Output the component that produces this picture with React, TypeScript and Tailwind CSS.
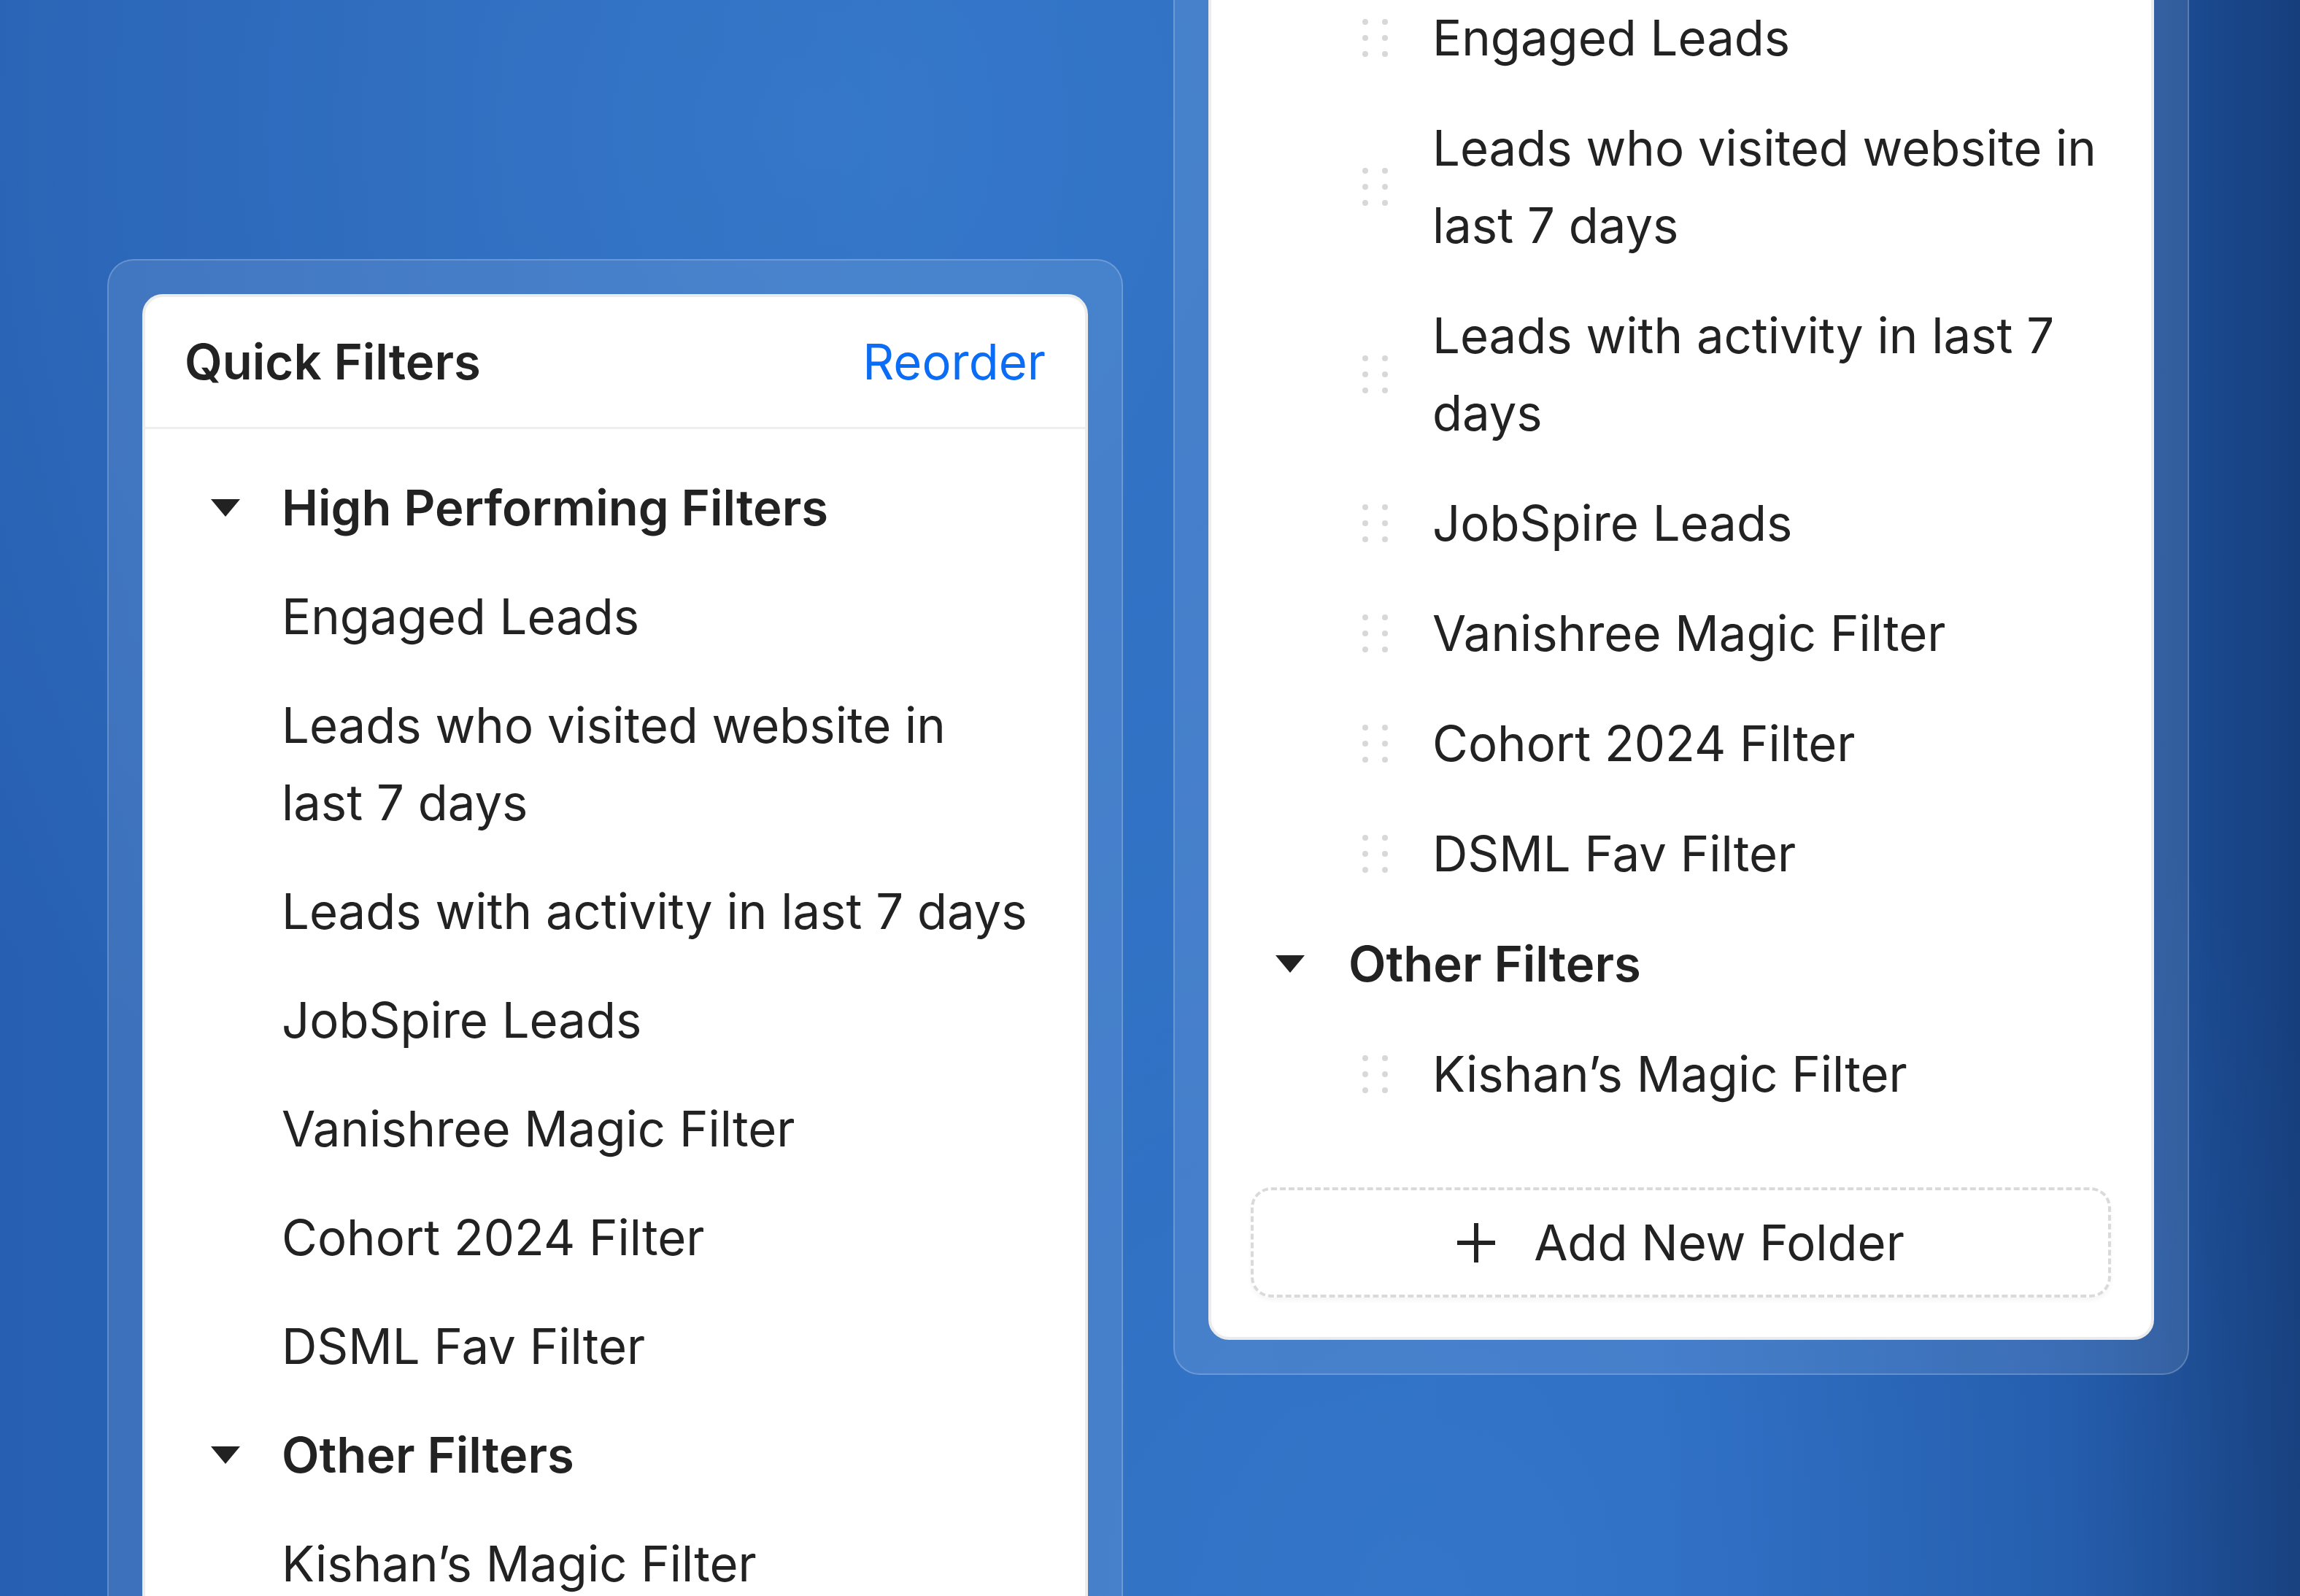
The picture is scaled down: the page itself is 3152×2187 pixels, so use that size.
import React from 'react'

type Row =
  | { kind: 'folder'; label: string }
  | { kind: 'item'; label: string }

const rows: Row[] = [
  { kind: 'folder', label: 'High Performing Filters' },
  { kind: 'item', label: 'Engaged Leads' },
  { kind: 'item', label: 'Leads who visited website in last 7 days' },
  { kind: 'item', label: 'Leads with activity in last 7 days' },
  { kind: 'item', label: 'JobSpire Leads' },
  { kind: 'item', label: 'Vanishree Magic Filter' },
  { kind: 'item', label: 'Cohort 2024 Filter' },
  { kind: 'item', label: 'DSML Fav Filter' },
  { kind: 'folder', label: 'Other Filters' },
  { kind: 'item', label: 'Kishan\u2019s Magic Filter' },
]

function Caret() {
  return (
    <svg width="40" height="24" viewBox="0 0 40 24" className="shrink-0">
      <polygon points="0,0 40,0 20,24" fill="#222222" />
    </svg>
  )
}

function DragHandle() {
  return (
    <div className="grid shrink-0 grid-cols-2 gap-x-[19px] gap-y-[14px]">
      {Array.from({ length: 6 }).map((_, i) => (
        <span key={i} className="h-2 w-2 rounded-full bg-[#d8d8d8]" />
      ))}
    </div>
  )
}

function PlusIcon() {
  return (
    <svg width="52" height="54" viewBox="0 0 52 54" className="shrink-0">
      <line x1="26" y1="0" x2="26" y2="54" stroke="#222222" strokeWidth="6" />
      <line x1="0" y1="27" x2="52" y2="27" stroke="#222222" strokeWidth="6" />
    </svg>
  )
}

function Frame({ children }: { children: React.ReactNode }) {
  return (
    <div className="w-[1392px] rounded-[36px] border-2 border-white/20 bg-white/10 p-[46px]">
      <div className="rounded-[28px] border-4 border-[#ececec] bg-white">{children}</div>
    </div>
  )
}

function FilterList() {
  return (
    <div className="pt-[33px]">
      {rows.map((row) =>
        row.kind === 'folder' ? (
          <div key={row.label} className="flex items-center gap-[57px] py-[21.5px] pl-[90px] pr-[68px]">
            <Caret />
            <span className="font-semibold">{row.label}</span>
          </div>
        ) : (
          <div key={row.label} className="py-[21.5px] pl-[187px] pr-[68px]">
            {row.label}
          </div>
        ),
      )}
    </div>
  )
}

function ReorderList() {
  return (
    <div className="pt-[124.5px] pb-[54px]">
      {rows.slice(1).map((row) =>
        row.kind === 'folder' ? (
          <div key={row.label} className="flex items-center gap-[60px] py-[22.5px] pl-[88px] pr-[50px]">
            <Caret />
            <span className="font-semibold">{row.label}</span>
          </div>
        ) : (
          <div key={row.label} className="flex items-center gap-[61px] py-[22.5px] pl-[207px] pr-[50px]">
            <DragHandle />
            <span>{row.label}</span>
          </div>
        ),
      )}
      <button className="mx-[54px] mt-[79.5px] flex h-[151px] w-[calc(100%-109px)] items-center justify-center gap-[53px] rounded-[28px] border-4 border-dashed border-[#dadada] shadow-[0_4px_6px_rgba(0,0,0,0.04)]">
        <PlusIcon />
        <span>Add New Folder</span>
      </button>
    </div>
  )
}

export default function App() {
  return (
    <div
      className="flex h-[2187px] w-[3152px] gap-[69px] overflow-hidden bg-[radial-gradient(ellipse_at_35%_8%,rgba(80,150,228,0.28),transparent_55%),radial-gradient(ellipse_at_62%_100%,rgba(80,150,228,0.25),transparent_50%),linear-gradient(90deg,#2760b2_0%,#2c6cc0_40%,#2a69bf_72%,#2158a8_90%,#163e7c_100%)] pl-[147px] text-[67px] leading-[106px] text-[#222222]"
      style={{ fontFamily: 'Inter, "Noto Sans", sans-serif' }}
    >
      <div className="mt-[355px] shrink-0">
        <Frame>
          <div className="flex h-[181px] items-center justify-between border-b-[3px] border-[#efefef] pl-[54px] pr-[54px]">
            <span className="font-semibold">Quick Filters</span>
            <span className="text-[#0b6cf5]">Reorder</span>
          </div>
          <FilterList />
        </Frame>
      </div>
      <div className="-mt-[200px] shrink-0">
        <Frame>
          <ReorderList />
        </Frame>
      </div>
    </div>
  )
}
